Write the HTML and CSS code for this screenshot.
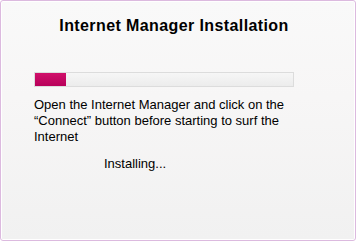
FILE: index.html
```html
<!DOCTYPE html>
<html lang="en">
<head>
  <meta charset="UTF-8" />
  <title>Internet Manager Installation</title>
  <link rel="stylesheet" href="styles.css">
</head>
<body>

  <!-- Dialog window -->
  <div class="window">
    <div class="inner">
      <h2 class="title">Internet Manager Installation</h2>

      <div class="progress">
        <div class="progress-fill" style="width: 12%"></div>
      </div>

      <p class="message">Open the Internet Manager and click on the &ldquo;Connect&rdquo; button before starting to surf the Internet</p>

      <div class="status">Installing...</div>
    </div>
  </div>

</body>
</html>
```

FILE: styles.css
```css
:root {
  --frame: #dcbadf;
  --accent: #c4005a;
  --text-dark: #000;
}

* {
  box-sizing: border-box;
}

body {
  margin: 0;
  font-family: 'Liberation Sans', Arial, sans-serif;
  color: var(--text-dark);
  background: #fff;
}

.window {
  width: 356px;
  height: 241px;
  border: 1px solid var(--frame);
  border-radius: 3px;
  background: #fff;
  padding: 1px;
}

.inner {
  height: 100%;
  background: linear-gradient(to bottom, #f9f9f9 0%, #f7f6f6 40%, #f1f1f1 100%);
  padding: 14px 32px 0 32px;
}

.title {
  margin: 0;
  padding-right: 8px;
  font-size: 16px;
  letter-spacing: 0.4px;
  font-weight: bold;
  text-align: center;
  line-height: 20px;
}

.progress {
  margin-top: 36px;
  height: 15px;
  border: 1px solid #dcdcdc;
  background: linear-gradient(to bottom, #f6f6f6, #ececec);
  width: 260px;
}

.progress-fill {
  height: 100%;
  background: linear-gradient(to bottom, #d0106a, #b8005a);
}

.message {
  margin: 10px 0 0 0;
  font-size: 13px;
  line-height: 16px;
  width: 270px;
}

.status {
  margin-top: 11px;
  padding-left: 70px;
  font-size: 13px;
}
```
